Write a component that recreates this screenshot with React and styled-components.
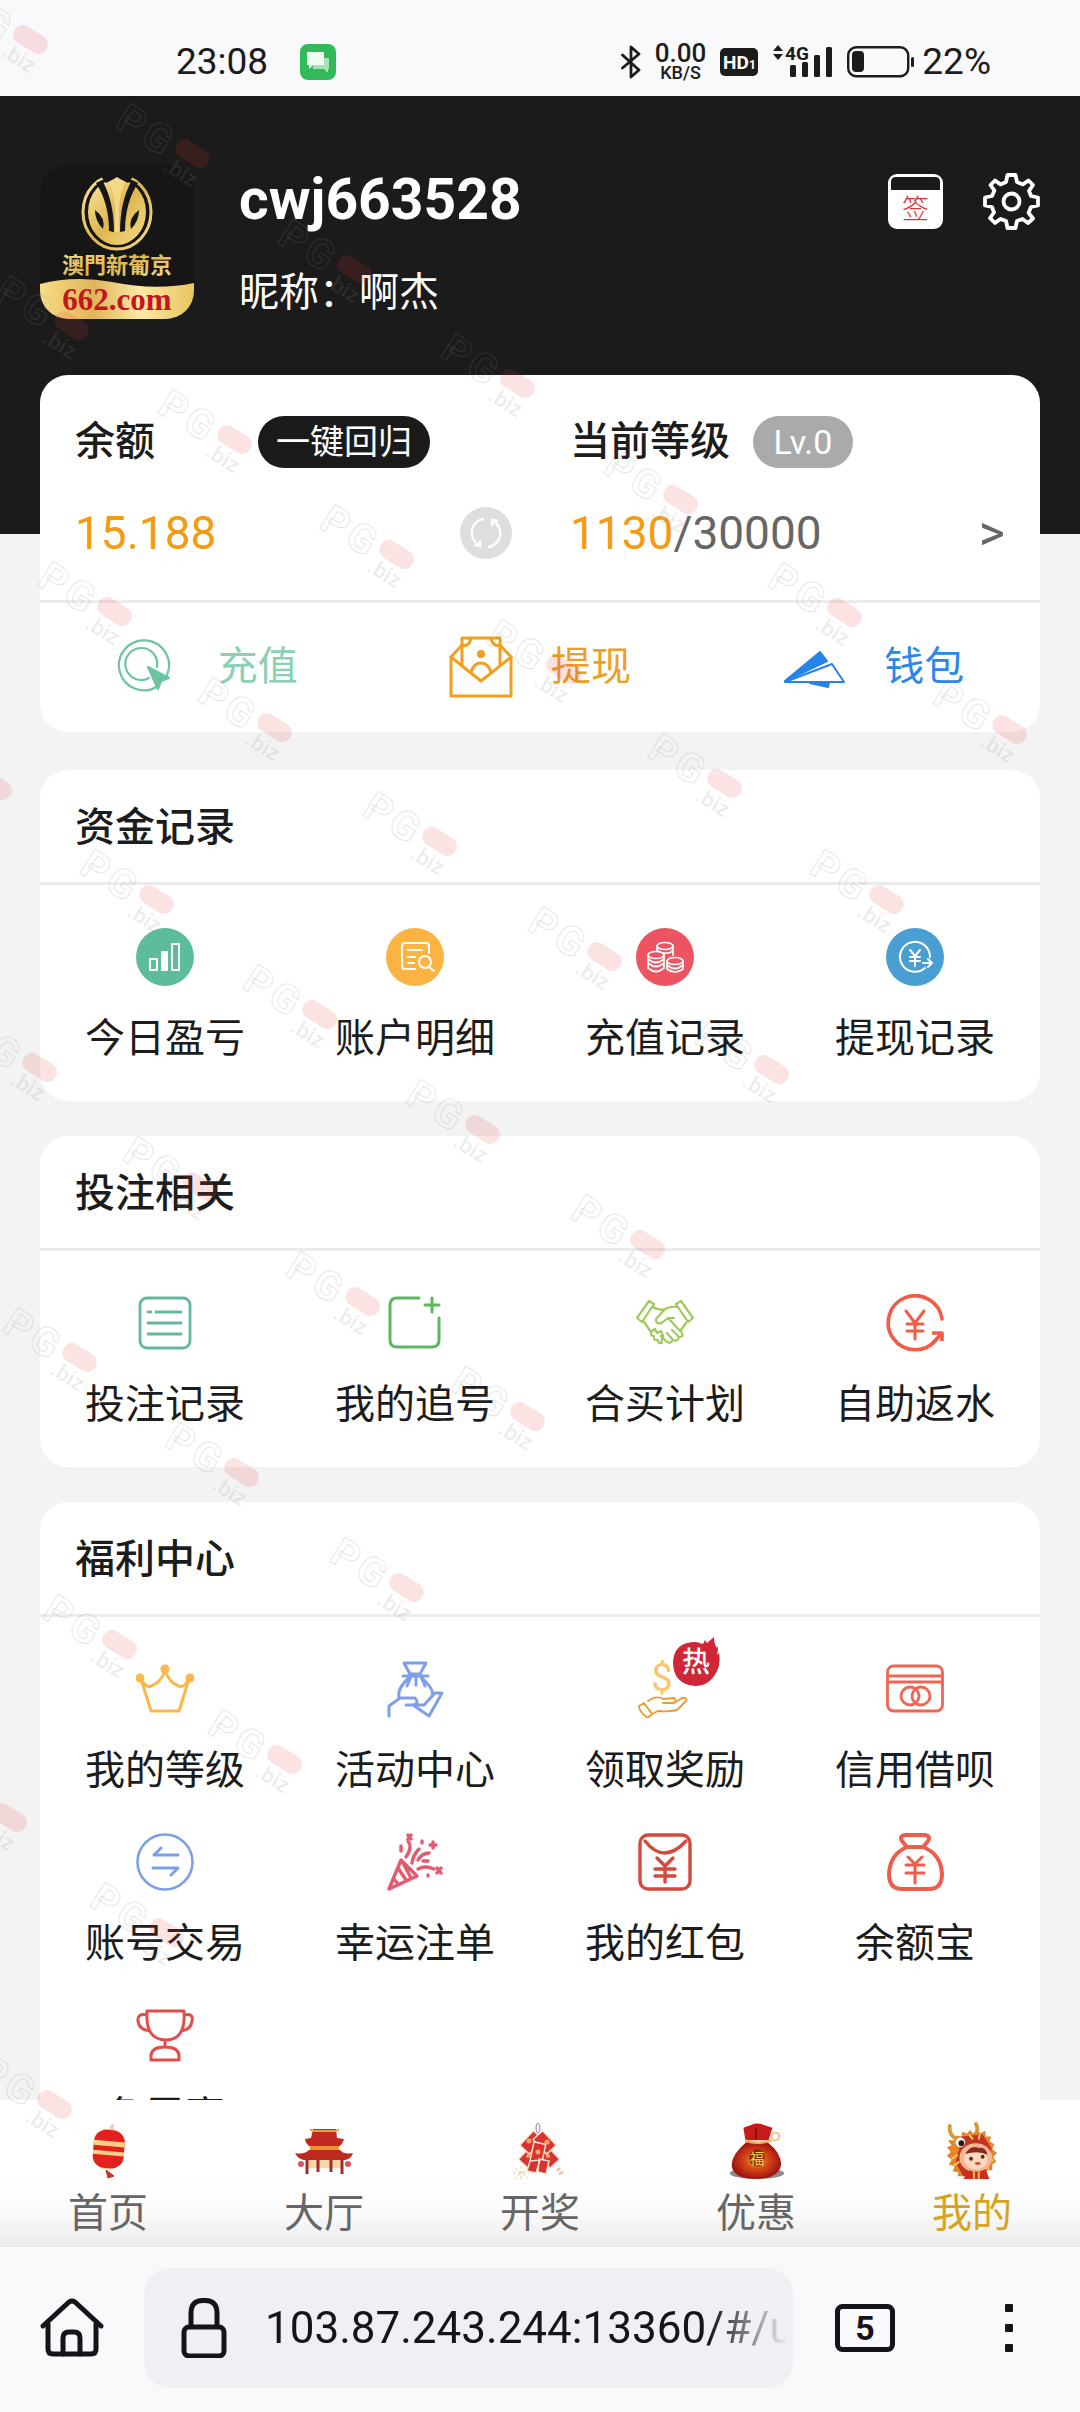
import React from "react";
import styled, { createGlobalStyle } from "styled-components";

const GlobalStyle = createGlobalStyle`
  * { box-sizing: border-box; }
  body {
    margin: 0;
    background: #f3f3f3;
    color: #1c1c1c;
    font-family: Roboto, "Noto Sans CJK SC", sans-serif;
    font-size: 40px;
    line-height: 56px;
  }
  a { color: inherit; text-decoration: none; }
  button, input { font: inherit; color: inherit; border: 0; padding: 0; background: none; }
  svg { display: block; flex: none; }
`;

const Screen = styled.div`
  position: relative;
  display: flex;
  flex-direction: column;
  height: 100vh;
  overflow: hidden;
`;

/* ---------- status bar ---------- */

const StatusBar = styled.header`
  display: flex;
  align-items: center;
  justify-content: space-between;
  height: 96px;
  padding: 28px 89px 0 176px;
  background: #f9f9fb;
  color: #1c1c1c;
  flex: none;
`;

const StatusGroup = styled.div`
  display: flex;
  align-items: center;
  gap: ${(p) => p.$gap}px;
`;

const StatusText = styled.span`
  font-size: 37px;
  line-height: 48px;
`;

const Speed = styled.div`
  display: flex;
  flex-direction: column;
  align-items: center;
  padding-top: 2px;
  font-weight: 500;
`;

const SpeedValue = styled.span`
  font-size: 26px;
  line-height: 20px;
`;

const SpeedUnit = styled.span`
  font-size: 18px;
  line-height: 20px;
`;

/* ---------- page ---------- */

const Main = styled.main`
  flex: 1;
  min-height: 0;
  overflow-y: auto;
  scrollbar-width: none;
`;

const Hero = styled.section`
  display: flex;
  align-items: flex-start;
  padding: 69px 40px 213px;
  background: #1b1b1b;
  color: #fff;
`;

const Profile = styled.div`
  flex: 1;
  padding-left: 45px;
`;

const UserName = styled.h1`
  margin: 0;
  font-size: 57px;
  line-height: 70px;
  font-weight: 700;
`;

const Nickname = styled.p`
  margin: 30px 0 0;
`;

const HeroTools = styled.div`
  display: flex;
  gap: 40px;
  padding-top: 8px;
`;

const IconButton = styled.button`
  display: block;
  cursor: pointer;
`;

const Cards = styled.div`
  display: flex;
  flex-direction: column;
  gap: 35px;
  margin-top: -159px;
  padding: 0 40px 40px;
`;

const Card = styled.section`
  border-radius: 28px;
  background: #fff;
`;

const AccountCard = styled(Card)`
  margin-bottom: 3px;
`;

const Summary = styled.div`
  display: grid;
  grid-template-columns: 1fr 1fr;
  padding: 39px 0;
  border-bottom: 3px solid #ececec;
`;

const SummaryColumn = styled.div`
  display: flex;
  flex-direction: column;
  gap: 35px;
  padding: 0 ${(p) => p.$end}px 0 ${(p) => p.$start}px;
`;

const SummaryLine = styled.div`
  display: flex;
  align-items: center;
  gap: ${(p) => p.$gap || 0}px;
  height: 56px;
  justify-content: ${(p) => (p.$spread ? "space-between" : "flex-start")};
`;

const SummaryTitle = styled.h2`
  margin: 0;
  font-size: 40px;
  font-weight: 500;
`;

const PillButton = styled.button`
  height: 52px;
  padding: 0 18px;
  border-radius: 26px;
  background: #1b1b1b;
  color: #fff;
  font-size: 34px;
  line-height: 52px;
  cursor: pointer;
`;

const LevelPill = styled.span`
  min-width: 100px;
  border-radius: 26px;
  background: #aaa;
  color: #fff;
  font-size: 34px;
  line-height: 52px;
  text-align: center;
`;

const Progress = styled.div`
  display: flex;
`;

const Amount = styled.span`
  font-size: 46px;
  line-height: 56px;
  color: ${(p) => (p.$muted ? "#666" : "#f39c12")};
`;

const MoreButton = styled.button`
  font-size: 50px;
  line-height: 56px;
  color: #666;
  cursor: pointer;
`;

const Actions = styled.nav`
  display: grid;
  grid-template-columns: repeat(3, 1fr);
  padding: 32px 0 33px;
`;

const Action = styled.a`
  display: flex;
  align-items: center;
  justify-content: center;
  gap: 38px;
  height: 64px;
  color: ${(p) => p.$color};
`;

const CardTitle = styled.h2`
  margin: 0;
  padding: 30px 35px 26px;
  border-bottom: 3px solid #ececec;
  font-size: 40px;
  font-weight: 500;
`;

const Grid = styled.div`
  display: grid;
  grid-template-columns: repeat(4, 1fr);
  row-gap: 34px;
  padding: 43px 0 34px;
`;

const Tile = styled.a`
  display: flex;
  flex-direction: column;
  align-items: center;
  gap: 25px;
`;

const TileIcon = styled.span`
  position: relative;
  display: block;
`;

const HotBadge = styled.span`
  position: absolute;
  left: 36px;
  top: -24px;
  display: block;
`;

/* ---------- bottom bars ---------- */

const TabBar = styled.nav`
  display: grid;
  grid-template-columns: repeat(5, 1fr);
  flex: none;
  height: 147px;
  padding-top: 22px;
  background: linear-gradient(#fff 50%, #fbfbfb 75%, #ebebeb);
  color: #666;
`;

const Tab = styled.a`
  display: flex;
  flex-direction: column;
  align-items: center;
  gap: 6px;
  color: ${(p) => (p.$active ? "#d7a31d" : "inherit")};
`;

const BrowserBar = styled.footer`
  display: flex;
  align-items: center;
  flex: none;
  height: 165px;
  padding: 0 67px 4px 40px;
  background: #f9f9fb;
  color: #15141a;
`;

const AddressBox = styled.label`
  display: flex;
  align-items: center;
  flex: 1;
  min-width: 0;
  gap: 38px;
  height: 120px;
  margin: 0 42px 0 40px;
  padding-left: 37px;
  border-radius: 26px;
  background: #f0f0f4;
`;

const Address = styled.input`
  flex: 1;
  min-width: 0;
  height: 60px;
  outline: none;
  font-size: 44px;
  mask-image: linear-gradient(to right, #000 84%, transparent 99%);
`;

const MenuButton = styled(IconButton)`
  margin-left: 110px;
`;

/* ---------- watermark ---------- */

const MarkLayer = styled.svg`
  position: absolute;
  inset: 0;
  width: 100%;
  height: 100%;
  pointer-events: none;
`;

const MARKS = [
  [-44, -10], [118, 104], [280, 220], [443, 334], [-3, 276], [160, 390], [322, 505],
  [606, 450], [770, 563], [40, 562], [489, 620], [200, 678], [935, 680], [-80, 736],
  [650, 734], [365, 792], [82, 850], [812, 850], [530, 907], [245, 965], [697, 1020],
  [-35, 1018], [408, 1080], [125, 1137], [573, 1195], [288, 1252], [5, 1308],
  [453, 1367], [167, 1423], [332, 1538], [45, 1595], [210, 1710], [-65, 1768],
  [92, 1883], [-20, 2055],
];

function Watermarks() {
  return (
    <MarkLayer aria-hidden="true">
      {MARKS.map(([x, y]) => (
        <g key={`${x},${y}`} transform={`translate(${x} ${y}) rotate(32)`}>
          <g fontSize="40" fontWeight="700" fill="none" stroke="#888" strokeOpacity="0.22">
            <text x="8" y="21">P</text>
            <text x="38" y="21">G</text>
          </g>
          <text x="72" y="32" fontSize="22" fontWeight="500" fill="#888" fillOpacity="0.16">.biz</text>
          <rect x="71" y="-7" width="37" height="19" rx="9" fill="#e0303c" fillOpacity="0.14" />
        </g>
      ))}
    </MarkLayer>
  );
}

/* ---------- drawings ---------- */

function Line({ size = 58, color, width = 2.5, children }) {
  return (
    <svg width={size} height={size} viewBox={`0 0 ${size} ${size}`} fill="none" stroke={color}
      strokeWidth={width} strokeLinecap="round" strokeLinejoin="round" aria-hidden="true">
      {children}
    </svg>
  );
}

function Disc({ color, children }) {
  return (
    <svg width="58" height="58" viewBox="0 0 58 58" fill="none" stroke="#fff" strokeWidth="2"
      strokeLinecap="round" strokeLinejoin="round" aria-hidden="true">
      <circle cx="29" cy="29" r="29" fill={color} stroke="none" />
      {children}
    </svg>
  );
}

const Logo = () => (
  <svg width="154" height="154" viewBox="0 0 154 154" role="img" aria-label="澳門新葡京">
    <defs>
      <linearGradient id="gold" x1="0" y1="0" x2="1" y2="1">
        <stop offset="0" stopColor="#fbe9a0" />
        <stop offset="0.5" stopColor="#dfb64f" />
        <stop offset="1" stopColor="#f6dd8c" />
      </linearGradient>
      <linearGradient id="band" x1="0" x2="1">
        <stop offset="0" stopColor="#f7dd85" />
        <stop offset="0.35" stopColor="#dfb55a" />
        <stop offset="0.65" stopColor="#fbe9a4" />
        <stop offset="1" stopColor="#e9c45f" />
      </linearGradient>
      <clipPath id="logoShape"><rect width="154" height="154" rx="28" /></clipPath>
    </defs>
    <g clipPath="url(#logoShape)">
      <rect width="154" height="154" fill="#161616" />
      <ellipse cx="77" cy="47" rx="34" ry="37" fill="none" stroke="url(#gold)" strokeWidth="3" />
      <ellipse cx="77" cy="47" rx="29" ry="33" fill="url(#gold)" />
      <path d="M62 15 Q74 36 74 67 L69 66 Q69 38 56 18 Z M92 15 Q80 36 80 67 L85 66 Q85 38 98 18 Z" fill="#161616" />
      <path d="M62 13 L77 8 L92 13 V9 L77 3 L62 9 Z M62 13 L66 18 L72 15 L77 13 L82 15 L88 18 L92 13 L77 8 Z" fill="#161616" />
      <path d="M69 17 L77 12 L85 17 Q80 28 79 42 L79 67 H75 L75 42 Q74 28 69 17 Z" fill="#f3d987" />
      <path d="M55 45 Q66 53 63 64 Q55 56 55 45 Z M99 45 Q88 53 91 64 Q99 56 99 45 Z" fill="#161616" />
      <text x="77" y="108" textAnchor="middle" fontSize="22" fontWeight="700" fill="url(#gold)" fontFamily='"Noto Sans CJK TC", sans-serif'>澳門新葡京</text>
      <path d="M0 119 Q34 110 72 117 Q116 126 154 118 V154 H0 Z" fill="url(#band)" />
      <text x="77" y="145" textAnchor="middle" fontSize="31" fontWeight="700" fill="#c4161c" fontFamily='"Liberation Serif", serif'>662.com</text>
    </g>
  </svg>
);

const MessageIcon = () => (
  <svg width="36" height="36" viewBox="0 0 36 36" aria-hidden="true">
    <rect width="36" height="36" rx="8" fill="#32b95a" />
    <path d="M13 14 H29 V25 H28 V29 L24 25 H13 Z" fill="#a5e3b5" />
    <path d="M7 8 H24 V21 H13 L9 25 V21 H7 Z" fill="#f0fbf2" />
  </svg>
);

const BluetoothIcon = () => (
  <svg width="20" height="34" viewBox="0 0 20 34" fill="none" stroke="#1c1c1c" strokeWidth="2.8" strokeLinejoin="round" strokeLinecap="round" aria-hidden="true">
    <path d="M1.500 10 L18 25 L10 32 V2 L18 9 L1.500 23" />
  </svg>
);

const HdIcon = () => (
  <svg width="38" height="28" viewBox="0 0 38 28" aria-hidden="true">
    <rect width="38" height="28" rx="5" fill="#1c1c1c" />
    <text x="3" y="21" fontSize="19" fontWeight="700" fill="#fff">HD</text>
    <text x="29" y="21" fontSize="12" fontWeight="700" fill="#fff">1</text>
  </svg>
);

const SignalIcon = () => (
  <svg width="61" height="36" viewBox="0 0 61 36" fill="#1c1c1c" aria-hidden="true">
    <path d="M1 7 L6 1 L11 7 Z M1 10 L6 16 L11 10 Z" />
    <text x="13" y="16" fontSize="19" fontWeight="700">4G</text>
    <rect x="18" y="21" width="6" height="12" rx="1.500" />
    <rect x="30" y="18" width="6" height="15" rx="1.500" />
    <rect x="42" y="11" width="6" height="22" rx="1.500" />
    <rect x="54" y="3" width="6" height="30" rx="1.500" />
  </svg>
);

const BatteryIcon = () => (
  <svg width="67" height="32" viewBox="0 0 67 32" aria-hidden="true">
    <rect x="1.200" y="1.200" width="60" height="29" rx="8" fill="none" stroke="#1c1c1c" strokeWidth="2.400" />
    <rect x="5" y="5" width="12" height="21" rx="4" fill="#1c1c1c" />
    <rect x="64" y="11" width="3" height="10" rx="1.500" fill="#1c1c1c" />
  </svg>
);

const SignIcon = () => (
  <svg width="55" height="55" viewBox="0 0 55 55" aria-hidden="true">
    <rect width="55" height="55" rx="9" fill="#fff" />
    <path d="M3 16 V8 Q3 3 8 3 H47 Q52 3 52 8 V16 Z" fill="#1b1b1b" />
    <text x="27.500" y="45" fontSize="27" textAnchor="middle" fontWeight="300" fill="#d8342c" fontFamily='"Noto Sans CJK SC", sans-serif'>签</text>
  </svg>
);

const GearIcon = () => (
  <svg width="57" height="57" viewBox="0 0 57 57" fill="none" stroke="#fff" strokeWidth="3.800" strokeLinejoin="round" aria-hidden="true">
    <path d="M24.500 2 H32.500 L34 9 L39.800 11.400 L45.500 7.500 L50 12 L46 17.800 L48 23 L55 24.500 V32.500 L48 34 L45.600 39.800 L50 45.500 L45 50 L39.500 46 L34 48 L32.500 55 H24.500 L23 48 L17.500 46 L12 50 L7 45 L11 39.500 L9 34 L2 32.500 V24.500 L9 23 L11.400 17.500 L7.500 12 L12 7.500 L17.500 11.400 L23 9 Z" />
    <circle cx="28.500" cy="28.500" r="8" />
  </svg>
);

const RefreshIcon = () => (
  <svg width="52" height="52" viewBox="0 0 52 52" fill="none" stroke="#fff" strokeWidth="2.400" strokeLinecap="round" strokeLinejoin="round" aria-hidden="true">
    <circle cx="26" cy="26" r="26" fill="#dedede" stroke="none" />
    <path d="M23 12 A14 14 0 0 0 19 38 M15 38 L20 39 L20 34 M29 40 A14 14 0 0 0 33 14 M37 14 L32 13 L32 18" />
  </svg>
);

const TopUpIcon = () => (
  <Line size={64} color="#6bc4a2" width={2.2}>
    <path d="M42 51 A25 25 0 1 1 51 40" />
    <path d="M33 43 A16 16 0 1 1 41 32" />
    <path d="M32 32 L53 43 L45 46 L42 54 Z" fill="#6bc4a2" />
  </Line>
);

const WithdrawIcon = () => (
  <Line size={64} color="#f0a01e" width={3}>
    <path d="M13 10 L2 22 V61 H62 V22 L51 10" />
    <path d="M2 22 L32 46 L62 22" />
    <path d="M13 30 V3 H51 V30 M13 11 Q21 11 22 3 M51 11 Q43 11 42 3" />
    <path d="M22 38 Q24 28 32 28 Q40 28 42 38" />
    <circle cx="32" cy="19" r="2.500" fill="#f0a01e" />
  </Line>
);

const WalletIcon = () => (
  <Line size={64} color="#2583ea" width={2}>
    <path d="M3 46 L38 17 L45 26 Z" fill="#2583ea" />
    <path d="M3 47 L50 29 L62 47 Z" />
    <path d="M28 48 L46 52 L47 48 Z" fill="#2583ea" />
  </Line>
);

const yen = "M20 17 L29 29 L38 17 M21 30 H37 M21 37 H37 M29 29 V45";

const icons = {
  profit: (
    <Disc color="#5dbd9b">
      <rect x="14" y="31" width="7" height="11" /><rect x="26" y="24" width="5" height="18" fill="#fff" /><rect x="36" y="16" width="7" height="26" />
    </Disc>
  ),
  detail: (
    <Disc color="#fbb441">
      <path d="M43 25 V18 Q43 15 40 15 H19 Q16 15 16 18 V38 Q16 41 19 41 H29 M22 22 H36 M22 29 H29 M22 35 H28" />
      <circle cx="39" cy="34" r="6" /><path d="M43 39 L48 43" />
    </Disc>
  ),
  deposit: (
    <Disc color="#ec5462">
      <g strokeWidth="1.700">
        <ellipse cx="29" cy="18" rx="8" ry="3.500" /><path d="M21 18 V22 M37 18 V27 M21 22 Q24 25 28 25 M29 25 Q34 26 37 22" />
        <ellipse cx="20" cy="27" rx="8" ry="3.500" /><path d="M12 27 V40 Q20 47 28 40 V27 M12 31 Q20 38 28 31 M12 35 Q20 42 28 35" />
        <ellipse cx="39" cy="33" rx="8" ry="3.500" /><path d="M31 33 V41 Q39 47 47 41 V33 M31 37 Q39 44 47 37" />
      </g>
    </Disc>
  ),
  payout: (
    <Disc color="#4a9fd2">
      <path d="M39 40 A15 15 0 1 1 44 29" />
      <path d="M24 22 L29 28 L34 22 M24 29 H34 M24 33 H34 M29 28 V38 M37 35 H46 M42 31 L46 35 L42 39" />
    </Disc>
  ),
  bets: (
    <Line color="#62b9a0" width={2.8}>
      <rect x="4" y="4" width="50" height="50" rx="7" />
      <path d="M12 18 H15 M20 18 H45 M12 29 H45 M12 40 H45" />
    </Line>
  ),
  chase: (
    <Line color="#5cb85f" width={3}>
      <path d="M33 4 H11 Q4 4 4 11 V46 Q4 53 11 53 H46 Q53 53 53 46 V24" />
      <path d="M46 4 V18 M39 11 H53" />
    </Line>
  ),
  group: (
    <Line color="#9fc95c" width={2.2}>
      <path d="M13 7 L18 10 L6 28 L1 24 Z M45 7 L40 10 L52 28 L57 24 Z" />
      <path d="M17 13 Q23 17 29 15 Q35 12 41 13 M29 15 L20 25 Q20 32 27 28 L32 24 L46 39 Q48 43 43 43 M50 29 L45 36 M8 28 L15 38" />
      <path d="M43 43 Q42 48 37 46 Q34 51 30 47 M36 36 L43 43 M31 39 L37 46 M25 42 L30 47" />
      <path d="M15 38 L19 35 L21 39 L25 37 L27 42 L25 49 M15 38 Q14 42 18 42 Q17 47 22 46 Q22 50 26 49 M32 24 H38" />
    </Line>
  ),
  rebate: (
    <Line color="#f05c48" width={3.6}>
      <path d="M56 25 A27 27 0 1 0 50 46" />
      <path d={yen} strokeWidth="3" /><path d="M46 39 H56 V47 M56 39 L46 50" strokeLinecap="butt" />
    </Line>
  ),
  crown: (
    <Line color="#fbb849" width={3}>
      <path d="M5 19 L15 51 H43 L53 19 Q47 30 41 25 Q34 23 29 11 Q24 23 17 25 Q11 30 5 19 Z" />
      <circle cx="4" cy="18" r="3" fill="#fbb849" /><circle cx="29" cy="9" r="3" fill="#fbb849" /><circle cx="54" cy="18" r="3" fill="#fbb849" />
    </Line>
  ),
  event: (
    <Line color="#7f9fe8" width={3}>
      <path d="M18 3 H40 L34 14 H24 Z M17 16 H42 M24 17 Q11 28 13 37 M35 17 Q49 30 46 36 M25 17 L21 26 M30 17 V25 M35 17 L39 26" />
      <path d="M3 56 V46 L14 38 H29 Q34 43 27 45 H20 M27 45 H38 L49 33 H56 L43 56 Z" />
    </Line>
  ),
  reward: (
    <Line color="#ec9b2e" width={1.8}>
      <text x="26" y="31" fontSize="38" textAnchor="middle" fill="#fbc46f" stroke="none">$</text>
      <path d="M12 41 Q20 35 27 39 L38 38 Q42 42 36 43 H27 M38 43 L46 38 Q52 37 50 41 L41 50 Q32 52 22 51 L16 54 M3 46 L8 43 L16 54 L12 58 Q3 52 3 46 Z" />
    </Line>
  ),
  credit: (
    <Line color="#ee6653" width={2.8}>
      <rect x="1.500" y="6" width="55" height="45" rx="6" /><path d="M2 16 H56 M2 22 H56" />
      <circle cx="24" cy="36" r="9" /><circle cx="35" cy="36" r="9" />
    </Line>
  ),
  trade: (
    <Line color="#7c9fe6" width={2.6}>
      <circle cx="29" cy="29" r="27.500" />
      <path d="M42 22 H18 L25 15 M17 35 H42 L35 42" strokeWidth="3" />
    </Line>
  ),
  lucky: (
    <Line color="#e45b70" width={3.4}>
      <path d="M15 27 L31 43 L3 56 Z M12 35 L20 47 M17 30 L25 45 M8 46 L12 51" />
      <path d="M20 24 Q27 14 22 8 M26 30 Q27 22 33 16 M32 36 Q39 32 48 36 M32 27 Q36 20 43 20 M37 28 H42 M15 18 V13 M36 10 V8 M42 43 V42" />
      <path d="M22 2 L25 6 M25 2 L22 6 M44 12 H50 M47 9 V15 M51 35 L55 40 M55 35 L51 40" />
    </Line>
  ),
  packet: (
    <Line color="#d3493d" width={3.4}>
      <rect x="4" y="2" width="50" height="54" rx="8" />
      <path d="M9 8 Q28 32 50 8" />
      <path d="M21 25 L29 33 L37 25 M19 36 H39 M19 43 H39 M29 33 V49" />
    </Line>
  ),
  treasure: (
    <Line color="#ee5d4b" width={4}>
      <path d="M19 2 H39 Q45 3 42 8 L37 14 Q55 21 56 41 Q56 56 43 56 H16 Q3 56 3 41 Q4 21 21 14 L16 8 Q13 3 19 2 Z M20 14 H38" />
      <path d="M22 24 L29 31 L36 24 M20 32 H38 M20 40 H38 M29 31 V50" strokeWidth="3" />
    </Line>
  ),
  trophy: (
    <Line color="#e04d4b" width={3}>
      <path d="M11 5 H48 Q50 34 30 34 Q9 34 11 5 Z M11 9 Q1 7 2 15 Q3 24 14 25 M48 9 Q58 7 56 15 Q55 24 45 25 M29 34 V41 M15 54 V49 Q16 41 29 41 Q42 41 43 49 V54 Z" />
    </Line>
  ),
};

const HotFlame = () => (
  <svg width="48" height="50" viewBox="0 0 48 50" aria-hidden="true">
    <path d="M42 1 Q42 8 45 12 L46 10 Q46 16 45 19 L47 17 Q49 27 45 35 Q38 50 23 50 Q1 48 1 26 Q2 6 24 6 L31 8 L33 4 L35 7 Z" fill="#cf2737" />
    <text x="24" y="36" fontSize="28" textAnchor="middle" fontWeight="500" fill="#fff">热</text>
  </svg>
);

const tabIcons = {
  home: (
    <svg width="58" height="58" viewBox="0 0 58 58" aria-hidden="true">
      <path d="M32 8 Q31 2 34 3 V9" fill="none" stroke="#d99a93" />
      <g transform="rotate(5 29 30)">
        <rect x="22" y="7" width="14" height="40" rx="2" fill="#f7c66a" />
        <rect x="14" y="8" width="31" height="38" rx="12" fill="#e3201e" />
        <path d="M14 19 H45 V24 H14 Z M14 29 H45 V33 H14 Z" fill="#fbd083" />
      </g>
      <path d="M27 48 L35 54 L29 56 Z" fill="#c9302a" stroke="#c9302a" />
    </svg>
  ),
  hall: (
    <svg width="60" height="58" viewBox="0 0 60 58" aria-hidden="true">
      <rect x="14" y="33" width="33" height="13" fill="#f9d8a5" />
      <path d="M19 7 H42 L43 16 L50 17 Q48 24 43 25 H17 Q12 23 11 17 L17 16 Z" fill="#c02a22" />
      <path d="M17 9 V7 M44 9 V7 M18 9 H43" stroke="#e7a03d" strokeWidth="2" />
      <path d="M16 24 H45 V28 H16 Z" fill="#ed9233" />
      <path d="M15 28 H46 Q50 33 59 31 Q57 37 51 38 H10 Q4 37 1 31 Q10 33 15 28 Z" fill="#bd2b20" />
      <path d="M13 38 V52 M24 38 V50 M37 38 V50 M48 38 V52" stroke="#a9282b" strokeWidth="3" />
      <circle cx="7" cy="42" r="3" fill="#d65468" /><circle cx="54" cy="42" r="3" fill="#d65468" />
    </svg>
  ),
  draw: (
    <svg width="58" height="58" viewBox="0 0 58 58" aria-hidden="true">
      <ellipse cx="27" cy="6" rx="2" ry="5" fill="none" stroke="#a779a0" />
      <g transform="translate(-2 0)">
        <g fill="#d93430" stroke="#fbe3d2" strokeWidth="1.500">
          <rect x="11" y="27" width="22" height="13" transform="rotate(-47 22 34)" />
          <rect x="27" y="27" width="22" height="13" transform="rotate(47 38 34)" />
          <rect x="12" y="14" width="20" height="13" transform="rotate(-47 22 20)" />
          <rect x="26" y="14" width="20" height="13" transform="rotate(47 36 20)" />
          <rect x="23" y="21" width="12" height="19" transform="rotate(12 29 30)" />
          <path d="M21 39 L31 38 L27 51 L18 49 Z M30 37 L40 39 L37 52 L29 50 Z" />
        </g>
        <g fill="#f4a65c"><circle cx="20" cy="19" r="2.500" /><circle cx="38" cy="20" r="2.500" /><circle cx="29" cy="30" r="2.500" /><circle cx="19" cy="34" r="2" /><circle cx="39" cy="34" r="2" /></g>
      </g>
      <path d="M4 46 L17 56 M10 44 V58 M17 46 L3 57 M2 51 H18" stroke="#ecd18f" strokeDasharray="3 2" />
      <path d="M46 49 L49 46 M48 52 L52 50" stroke="#e9b5ab" strokeWidth="2" />
    </svg>
  ),
  promo: (
    <svg width="58" height="58" viewBox="0 0 58 60" aria-hidden="true">
      <defs>
        <radialGradient id="pouch"><stop offset="0" stopColor="#f7b733" /><stop offset="0.45" stopColor="#d84a18" /><stop offset="1" stopColor="#a11410" /></radialGradient>
      </defs>
      <ellipse cx="30" cy="53" rx="28" ry="6" fill="#8b8b8b" />
      <path d="M19 21 Q3 34 4 46 Q6 59 30 59 Q53 58 55 44 Q55 32 41 21 Z" fill="url(#pouch)" />
      <path d="M18 19 L16 6 L24 3 Q30 0 37 3 L46 6 L42 19 Z" fill="#c81b17" />
      <path d="M29 6 V18" stroke="#86100e" strokeWidth="2" />
      <path d="M18 19 Q30 24 45 19" fill="none" stroke="#f0b35a" strokeWidth="2.500" />
      <circle cx="49" cy="15" r="4" fill="none" stroke="#eec28a" strokeWidth="2" />
      <ellipse cx="30" cy="37" rx="8" ry="9" fill="#8c2a0e" />
      <text x="30" y="43" fontSize="15" textAnchor="middle" fill="#fbd34b">福</text>
    </svg>
  ),
  mine: (
    <svg width="58" height="58" viewBox="0 0 58 60" aria-hidden="true">
      <path d="M12 17 Q5 13 6 4 M33 12 Q36 8 33 2" stroke="#d99a3c" strokeWidth="4" fill="none" strokeLinecap="round" />
      <path d="M13 14 L18 15 L19 10 L24 12 L27 8 L30 12 L35 8 L37 12 L43 9 L43 15 L49 15 L47 20 L52 23 L50 28 L55 32 L51 36 L54 41 L50 44 L50 50 L45 50 L42 56 H14 L15 52 L9 51 L11 46 L5 44 L8 39 L3 35 L7 31 L3 26 L8 24 L4 19 L11 19 Z" fill="#e5852c" />
      <path d="M18 15 L40 13 L49 27 L49 42 L38 56 H20 L12 42 L16 27 Z" fill="#c43422" />
      <path d="M8 38 L14 34 M10 45 L16 41 M46 49 L42 44 M51 40 L46 37 M26 13 L30 18 M37 13 L36 18" stroke="#f8d05e" strokeWidth="2" />
      <ellipse cx="33" cy="37" rx="17" ry="15" fill="#f6b894" />
      <ellipse cx="33" cy="38" rx="12" ry="11" fill="#fbd9bc" />
      <path d="M22 33 Q28 23 36 27 Q43 25 45 34 Q36 29 22 33 Z" fill="#8c2a1b" />
      <circle cx="17" cy="21" r="5" fill="#fff" /><circle cx="18" cy="22" r="3" fill="#2a1a14" />
      <circle cx="28" cy="38" r="2" fill="#672518" /><circle cx="40" cy="36" r="2" fill="#672518" />
      <ellipse cx="35" cy="43" rx="3" ry="1.500" fill="#d2473a" />
      <path d="M20 59 L26 50 Q34 53 43 49 L47 59 Z" fill="#d22c20" /><path d="M31 51 V59 M36 51 V59" stroke="#f2bb55" strokeWidth="2" />
    </svg>
  ),
};

const HomeIcon = () => (
  <svg width="64" height="60" viewBox="0 0 64 60" fill="none" stroke="#15141a" strokeWidth="5" strokeLinecap="round" strokeLinejoin="round" aria-hidden="true">
    <path d="M3 28 L29 4 Q32 2 35 4 L61 28" />
    <path d="M8 26 V51 Q8 56 13 56 H51 Q56 56 56 51 V26" />
    <path d="M23 56 V40 Q23 34 29 34 H34 Q40 34 40 40 V56" />
  </svg>
);

const LockIcon = () => (
  <svg width="46" height="60" viewBox="0 0 46 60" fill="none" stroke="#15141a" strokeWidth="5" aria-hidden="true">
    <rect x="3" y="29" width="40" height="29" rx="5" />
    <path d="M10 29 V15 Q10 2 23 2.500 Q36 2 36 15 V29" />
  </svg>
);

const TabsIcon = () => (
  <svg width="60" height="48" viewBox="0 0 60 48" aria-hidden="true">
    <rect x="2.500" y="2.500" width="55" height="43" rx="5" fill="none" stroke="#15141a" strokeWidth="5" />
    <text x="30" y="36" fontSize="34" fontWeight="700" textAnchor="middle" fill="#15141a">5</text>
  </svg>
);

const DotsIcon = () => (
  <svg width="8" height="48" viewBox="0 0 8 48" fill="#15141a" aria-hidden="true">
    <rect width="8" height="8" rx="1" /><rect y="20" width="8" height="8" rx="1" /><rect y="40" width="8" height="8" rx="1" />
  </svg>
);

/* ---------- data ---------- */

const sections = [
  {
    title: "资金记录",
    items: [
      ["profit", "今日盈亏"], ["detail", "账户明细"], ["deposit", "充值记录"], ["payout", "提现记录"],
    ],
  },
  {
    title: "投注相关",
    items: [
      ["bets", "投注记录"], ["chase", "我的追号"], ["group", "合买计划"], ["rebate", "自助返水"],
    ],
  },
  {
    title: "福利中心",
    items: [
      ["crown", "我的等级"], ["event", "活动中心"], ["reward", "领取奖励", true], ["credit", "信用借呗"],
      ["trade", "账号交易"], ["lucky", "幸运注单"], ["packet", "我的红包"], ["treasure", "余额宝"],
      ["trophy", "争霸赛"],
    ],
  },
];

const tabs = [
  ["home", "首页"], ["hall", "大厅"], ["draw", "开奖"], ["promo", "优惠"], ["mine", "我的"],
];

function MenuCard({ title, items }) {
  return (
    <Card>
      <CardTitle>{title}</CardTitle>
      <Grid>
        {items.map(([icon, label, hot]) => (
          <Tile href="#" key={label}>
            <TileIcon>
              {icons[icon]}
              {hot && <HotBadge><HotFlame /></HotBadge>}
            </TileIcon>
            {label}
          </Tile>
        ))}
      </Grid>
    </Card>
  );
}

export default function App() {
  return (
    <Screen>
      <GlobalStyle />
      <StatusBar>
        <StatusGroup $gap={32}>
          <StatusText>23:08</StatusText>
          <MessageIcon />
        </StatusGroup>
        <StatusGroup $gap={14}>
          <BluetoothIcon />
          <Speed>
            <SpeedValue>0.00</SpeedValue>
            <SpeedUnit>KB/S</SpeedUnit>
          </Speed>
          <HdIcon />
          <SignalIcon />
          <StatusGroup $gap={8}>
            <BatteryIcon />
            <StatusText>22%</StatusText>
          </StatusGroup>
        </StatusGroup>
      </StatusBar>

      <Main>
        <Hero>
          <Logo />
          <Profile>
            <UserName>cwj663528</UserName>
            <Nickname>昵称：啊杰</Nickname>
          </Profile>
          <HeroTools>
            <IconButton type="button" aria-label="签到"><SignIcon /></IconButton>
            <IconButton type="button" aria-label="设置"><GearIcon /></IconButton>
          </HeroTools>
        </Hero>

        <Cards>
          <AccountCard>
            <Summary>
              <SummaryColumn $start={35} $end={28}>
                <SummaryLine $gap={103}>
                  <SummaryTitle>余额</SummaryTitle>
                  <PillButton type="button">一键回归</PillButton>
                </SummaryLine>
                <SummaryLine $spread>
                  <Amount>15.188</Amount>
                  <IconButton type="button" aria-label="刷新余额"><RefreshIcon /></IconButton>
                </SummaryLine>
              </SummaryColumn>
              <SummaryColumn $start={30} $end={35}>
                <SummaryLine $gap={23}>
                  <SummaryTitle>当前等级</SummaryTitle>
                  <LevelPill>Lv.0</LevelPill>
                </SummaryLine>
                <SummaryLine $spread>
                  <Progress>
                    <Amount>1130</Amount>
                    <Amount $muted>/30000</Amount>
                  </Progress>
                  <MoreButton type="button" aria-label="等级详情">&gt;</MoreButton>
                </SummaryLine>
              </SummaryColumn>
            </Summary>
            <Actions>
              <Action href="#" $color="#8bd0b3"><TopUpIcon />充值</Action>
              <Action href="#" $color="#eda024"><WithdrawIcon />提现</Action>
              <Action href="#" $color="#2b87e8"><WalletIcon />钱包</Action>
            </Actions>
          </AccountCard>
          {sections.map((s) => (
            <MenuCard key={s.title} {...s} />
          ))}
        </Cards>
      </Main>

      <TabBar>
        {tabs.map(([icon, label]) => (
          <Tab href="#" key={label} $active={icon === "mine"}>
            {tabIcons[icon]}
            {label}
          </Tab>
        ))}
      </TabBar>

      <BrowserBar>
        <IconButton type="button" aria-label="主页"><HomeIcon /></IconButton>
        <AddressBox>
          <LockIcon />
          <Address aria-label="网址" defaultValue="103.87.243.244:13360/#/user" />
        </AddressBox>
        <IconButton type="button" aria-label="标签页"><TabsIcon /></IconButton>
        <MenuButton type="button" aria-label="菜单"><DotsIcon /></MenuButton>
      </BrowserBar>

      <Watermarks />
    </Screen>
  );
}
